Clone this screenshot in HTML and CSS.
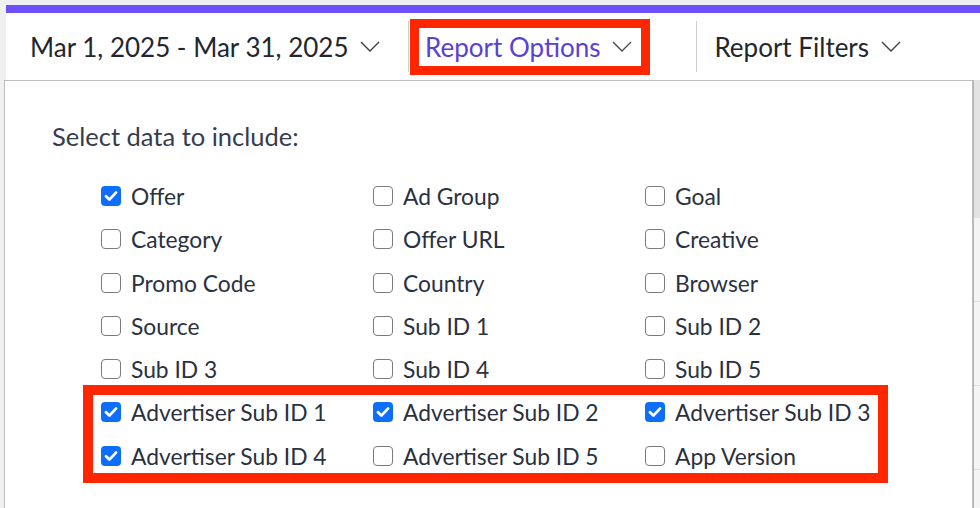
FILE: index.html
```html
<!DOCTYPE html>
<html lang="en">
<head>
    <meta charset="UTF-8">
    <meta name="viewport" content="width=device-width, initial-scale=1.0">
    <title>Report Options</title>
    <link rel="stylesheet" href="styles.css">
</head>
<body>
    <div class="toolbar">
        <div class="tool date-range">
            <span>Mar 1, 2025 - Mar 31, 2025</span>
            <svg class="chevron" width="20" height="11" viewBox="0 0 20 11"><path d="M1 1 L10 10 L19 1" /></svg>
        </div>
        <div class="divider"></div>
        <div class="tool report-options">
            <span>Report Options</span>
            <svg class="chevron" width="20" height="11" viewBox="0 0 20 11"><path d="M1 1 L10 10 L19 1" /></svg>
        </div>
        <div class="divider second"></div>
        <div class="tool">
            <span>Report Filters</span>
            <svg class="chevron" width="20" height="11" viewBox="0 0 20 11"><path d="M1 1 L10 10 L19 1" /></svg>
        </div>
    </div>

    <div class="main">
        <div class="panel">
            <div class="panel-title">Select data to include:</div>
            <div class="options" id="options"></div>
        </div>
        <div class="side">
            <div class="side-top"></div>
            <div class="side-row"></div>
            <div class="side-row"></div>
            <div class="side-row"><span class="side-mark"></span></div>
        </div>
    </div>

    <script>
        const fields = [
            ["Offer", true], ["Ad Group", false], ["Goal", false],
            ["Category", false], ["Offer URL", false], ["Creative", false],
            ["Promo Code", false], ["Country", false], ["Browser", false],
            ["Source", false], ["Sub ID 1", false], ["Sub ID 2", false],
            ["Sub ID 3", false], ["Sub ID 4", false], ["Sub ID 5", false]
        ];
        const advertiserFields = [
            ["Advertiser Sub ID 1", true], ["Advertiser Sub ID 2", true], ["Advertiser Sub ID 3", true],
            ["Advertiser Sub ID 4", true], ["Advertiser Sub ID 5", false], ["App Version", false]
        ];

        const checkSvg = '<svg width="20" height="20" viewBox="0 0 20 20"><path d="M5 10.2 L8.4 13.6 L15 6.6" /></svg>';

        function buildOption(name, checked) {
            const label = document.createElement('label');
            label.className = 'option';
            label.innerHTML = `<span class="box${checked ? ' checked' : ''}">${checked ? checkSvg : ''}</span><span>${name}</span>`;
            return label;
        }

        const options = document.getElementById('options');
        const grid = document.createElement('div');
        grid.className = 'option-grid';
        fields.forEach(f => grid.appendChild(buildOption(f[0], f[1])));
        options.appendChild(grid);

        const highlight = document.createElement('div');
        highlight.className = 'option-grid highlight';
        advertiserFields.forEach(f => highlight.appendChild(buildOption(f[0], f[1])));
        options.appendChild(highlight);
    </script>
</body>
</html>
```

FILE: styles.css
```css
body {
    margin: 0;
    background-color: #eff0f2;
    font-family: Lato, "Open Sans", sans-serif;
    color: #2a3140;
    height: 508px;
    overflow: hidden;
}

.toolbar {
    margin: 5px 0 0 6px;
    height: 67px;
    background-color: #fff;
    border-top: 8px solid #6d50f7;
    display: flex;
    align-items: center;
}

.tool {
    display: flex;
    align-items: center;
    gap: 12px;
    font-size: 26px;
    color: #22272e;
}

.date-range {
    padding-left: 24px;
    width: 378px;
}

.chevron path {
    fill: none;
    stroke: #3a3f46;
    stroke-width: 1.4;
}

.divider {
    width: 1px;
    height: 51px;
    background-color: #cfcfd2;
}

.divider.second {
    margin: 0 17px 0 46px;
}

.report-options {
    margin-left: 1px;
    border: 9px solid #ff2600;
    padding: 3px 9px 3px 6px;
    color: #5b40d6;
}

.report-options .chevron path {
    stroke: #4a4a52;
}

.main {
    display: flex;
    height: 428px;
}

.panel {
    flex: 1;
    margin-left: 4px;
    background-color: #fff;
    border: 1px solid #bdbdbd;
    border-bottom: none;
    padding-top: 40px;
}

.panel-title {
    padding-left: 47px;
    font-size: 25.5px;
    line-height: 30px;
    color: #363d4a;
}

.options {
    margin-top: 28px;
    padding-left: 78px;
}

.option-grid {
    display: grid;
    grid-template-columns: 272px 272px auto;
    row-gap: 9.33px;
    padding-left: 18px;
}

.option-grid.highlight {
    box-sizing: border-box;
    width: 805px;
    margin-top: -1px;
    padding-left: 8px;
    border: 10px solid #ff2600;
}

.option {
    display: flex;
    align-items: center;
    gap: 10px;
    height: 34px;
    font-size: 22.8px;
}

.box {
    box-sizing: border-box;
    flex-shrink: 0;
    width: 20px;
    height: 20px;
    border: 1.5px solid #7b7b7f;
    border-radius: 4px;
    background-color: #fff;
}

.box.checked {
    border: none;
    background-color: #0d6efd;
}

.box svg {
    display: block;
}

.box svg path {
    fill: none;
    stroke: #fff;
    stroke-width: 2.8;
    stroke-linecap: round;
    stroke-linejoin: round;
}

.side {
    width: 6px;
    border-left: 1px solid #b5b5b5;
    background-color: #f4f4f4;
}

.side-top {
    height: 138px;
    background-color: #e3e3e3;
}

.side-row {
    height: 83px;
    border-bottom: 1px solid #dedede;
    position: relative;
    overflow: hidden;
}

.side-mark {
    position: absolute;
    left: -1px;
    bottom: -14px;
    width: 12px;
    height: 3px;
    background-color: #e8741e;
    transform: rotate(-45deg);
}
```
